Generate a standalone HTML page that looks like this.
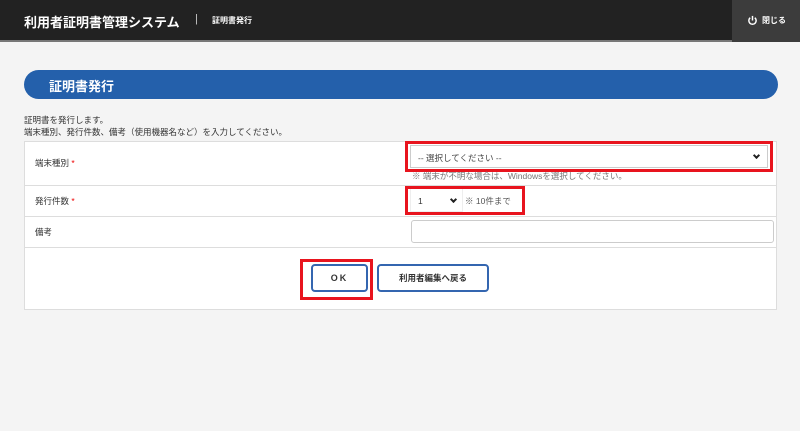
<!DOCTYPE html>
<html><head><meta charset="utf-8"><style>
*{box-sizing:border-box;margin:0;padding:0}
body{width:800px;height:431px;background:#f4f4f4;font-family:"Liberation Sans","Noto Sans CJK JP",sans-serif;position:relative;overflow:hidden;color:#333}
.hd{position:absolute;left:0;top:0;width:800px;height:42px;background:#222;border-bottom:2px solid #777}
.a{position:absolute}
.chev{position:absolute;width:5px;height:5px;border-right:2px solid #222;border-bottom:2px solid #222;transform:rotate(45deg)}
</style></head><body>
<div class="hd"></div>
<div class="a" style="left:24px;top:12px;color:#fff;font-size:13px;font-weight:bold">利用者証明書管理システム</div>
<div class="a" style="left:195px;top:13px;color:#ccc;font-size:11px">|</div>
<div class="a" style="left:212px;top:15px;color:#fff;font-size:8px;font-weight:bold">証明書発行</div>
<div class="a" style="left:732px;top:0;width:68px;height:42px;background:#3c3c3c"></div>
<svg class="a" style="left:747px;top:15px" width="11" height="11" viewBox="0 0 12 12"><path d="M3.5 3A4 4 0 1 0 8.5 3" fill="none" stroke="#fff" stroke-width="1.6"/><path d="M6 1v5" stroke="#fff" stroke-width="1.6"/></svg>
<div class="a" style="left:762px;top:15px;color:#fff;font-size:8px;font-weight:bold">閉じる</div>
<div class="a" style="left:24px;top:70px;width:754px;height:29px;background:#2460ab;border-radius:15px"></div>
<div class="a" style="left:49px;top:76px;color:#fff;font-size:13px;font-weight:bold">証明書発行</div>
<div class="a" style="left:24px;top:114px;font-size:8.5px;line-height:12px">証明書を発行します。<br>端末種別、発行件数、備考（使用機器名など）を入力してください。</div>
<div class="a" style="left:24px;top:141px;width:753px;height:169px;background:#fff;border:1px solid #ddd"></div>
<div class="a" style="left:25px;top:185px;width:751px;height:1px;background:#ddd"></div>
<div class="a" style="left:25px;top:216px;width:751px;height:1px;background:#ddd"></div>
<div class="a" style="left:25px;top:247px;width:751px;height:1px;background:#ddd"></div>
<div class="a" style="left:35px;top:157px;font-size:8.5px">端末種別 <span style="color:#e00">*</span></div>
<div class="a" style="left:35px;top:195px;font-size:8.5px">発行件数 <span style="color:#e00">*</span></div>
<div class="a" style="left:35px;top:226px;font-size:8.5px">備考</div>
<div class="a" style="left:410px;top:145px;width:358px;height:23px;border:1px solid #ccc;background:#fff;font-size:8.5px;padding:6px 7px;color:#444">-- 選択してください --<span class="chev" style="right:8px;top:7px"></span></div>
<div class="a" style="left:405px;top:141px;width:368px;height:31px;border:3px solid #e8141e"></div>
<div class="a" style="left:412px;top:170px;font-size:8.5px;color:#777">※ 端末が不明な場合は、Windowsを選択してください。</div>
<div class="a" style="left:410px;top:188px;width:53px;height:24px;border:1px solid #eee;background:#fff;font-size:8.5px;padding:7px 7px">1<span class="chev" style="right:6px;top:8px"></span></div>
<div class="a" style="left:465px;top:195px;font-size:8.5px;color:#555">※ 10件まで</div>
<div class="a" style="left:405px;top:186px;width:120px;height:29px;border:3px solid #e8141e"></div>
<div class="a" style="left:411px;top:220px;width:363px;height:23px;border:1px solid #ccc;border-radius:3px;background:#fff"></div>
<div class="a" style="left:311px;top:264px;width:57px;height:28px;border:2px solid #3466b0;border-radius:4px;font-size:9px;font-weight:bold;text-align:center;line-height:24px;letter-spacing:2px">OK</div>
<div class="a" style="left:300px;top:259px;width:73px;height:41px;border:3px solid #e8141e"></div>
<div class="a" style="left:377px;top:264px;width:112px;height:28px;border:2px solid #3466b0;border-radius:4px;font-size:8.5px;font-weight:bold;text-align:center;line-height:24px">利用者編集へ戻る</div>
</body></html>
